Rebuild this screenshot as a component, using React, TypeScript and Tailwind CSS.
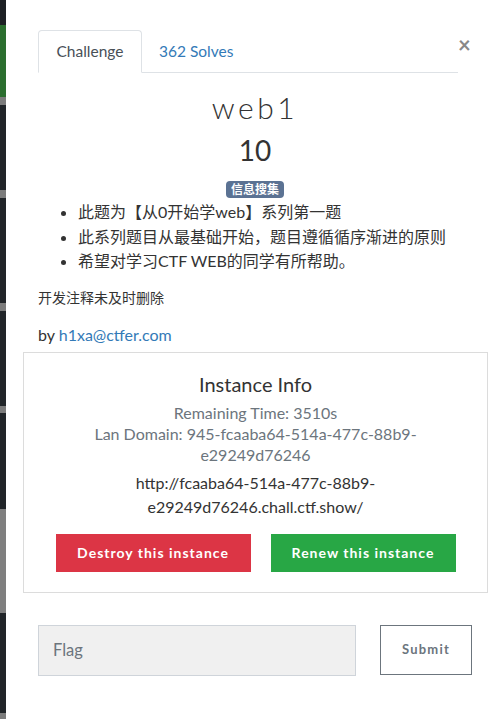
import React from "react";

const strip: { h: number; c: string }[] = [
  { h: 25, c: "bg-[#1d2024]" },
  { h: 72, c: "bg-[#2b6e2f]" },
  { h: 8, c: "bg-[#7c7c7c]" },
  { h: 85, c: "bg-[#212529]" },
  { h: 8, c: "bg-[#7c7c7c]" },
  { h: 105, c: "bg-[#212529]" },
  { h: 8, c: "bg-[#7c7c7c]" },
  { h: 95, c: "bg-[#212529]" },
  { h: 7, c: "bg-[#7c7c7c]" },
  { h: 96, c: "bg-[#212529]" },
  { h: 104, c: "bg-[#7f7f7f]" },
  { h: 100, c: "bg-[#212529]" },
  { h: 6, c: "bg-[#7c7c7c]" },
];

function BackdropStrip() {
  return (
    <div className="flex w-[6px] shrink-0 flex-col">
      {strip.map((s, i) => (
        <div key={i} className={s.c} style={{ height: s.h }} />
      ))}
    </div>
  );
}

export default function App() {
  return (
    <div className="flex h-[719px] w-[504px] overflow-hidden bg-white font-['Lato','Noto_Sans_CJK_SC',sans-serif] text-[#212529]">
      <BackdropStrip />
      <div className="flex flex-1 flex-col">
        {/* tabs */}
        <div className="mt-[30px] flex items-start">
          <div className="ml-[32px] flex w-[420px] border-b border-[#dee2e6]">
            <div className="-mb-px w-[104px] rounded-t border border-b-white border-[#dee2e6] bg-white py-[9px] text-center text-[15.5px] leading-[22px] text-[#495057]">
              Challenge
            </div>
            <div className="pl-[17px] py-[10px] text-[15.5px] leading-[22px] text-[#337ab7]">
              362 Solves
            </div>
          </div>
          <div className="ml-[0px] mt-[3px] text-[22px] font-bold leading-[24px] text-[#888]">
            ×
          </div>
        </div>

        {/* title */}
        <div className="mt-[16px] flex flex-col items-center">
          <h3 className="text-[30px] font-light leading-[36px] tracking-[3.5px] text-[#333]">
            web1
          </h3>
          <h4 className="mt-[8px] text-[28px] font-normal leading-[34px] text-[#333]">10</h4>
          <span className="mt-[14px] rounded-[4px] bg-[#5b7293] px-[5px] text-[12px] font-bold leading-[17px] text-white">
            信息搜集
          </span>
        </div>

        {/* description */}
        <div className="pl-[32px] pr-[20px]">
          <ul className="mt-[2px] list-disc pl-[40px] text-[16px] leading-[24.5px] text-[#333]">
            <li>此题为【从0开始学web】系列第一题</li>
            <li>此系列题目从最基础开始，题目遵循循序渐进的原则</li>
            <li>希望对学习CTF WEB的同学有所帮助。</li>
          </ul>
          <p className="mt-[13px] text-[14px] leading-[22px] text-[#333]">开发注释未及时删除</p>
          <p className="mt-[15px] text-[16px] leading-[22px] text-[#333]">
            by <a className="text-[#337ab7]">h1xa@ctfer.com</a>
          </p>
        </div>

        {/* instance box */}
        <div className="ml-[17px] mt-[6px] flex w-[465px] flex-col items-center border border-[#dcdcdc] px-[20px] pb-[20px] pt-[18px]">
          <div className="text-[20px] leading-[26px] text-[#333]">Instance Info</div>
          <div className="mt-[5px] text-center text-[16px] leading-[21px] text-[#6c757d]">
            <div>Remaining Time: 3510s</div>
            <div>
              Lan Domain: 945-fcaaba64-514a-477c-88b9-
              <br />
              e29249d76246
            </div>
          </div>
          <div className="mt-[6px] text-center text-[16px] leading-[24px] text-[#333]">
            http://fcaaba64-514a-477c-88b9-
            <br />
            e29249d76246.chall.ctf.show/
          </div>
          <div className="mt-[15px] flex gap-[20px]">
            <button className="h-[38px] w-[195px] bg-[#dc3545] text-[14px] font-bold tracking-[1px] text-white">
              Destroy this instance
            </button>
            <button className="h-[38px] w-[185px] bg-[#28a745] text-[14px] font-bold tracking-[1px] text-white">
              Renew this instance
            </button>
          </div>
        </div>

        {/* flag submit */}
        <div className="ml-[32px] mt-[32px] flex items-start gap-[24px]">
          <div className="flex h-[51px] w-[318px] items-center border border-[#cfd4da] bg-[#f0f0f0] px-[14px] text-[16.5px] text-[#6c757d]">
            Flag
          </div>
          <button className="h-[50px] w-[92px] border border-[#6c757d] text-[13px] font-bold tracking-[1.2px] text-[#6c757d]">
            Submit
          </button>
        </div>
      </div>
    </div>
  );
}
